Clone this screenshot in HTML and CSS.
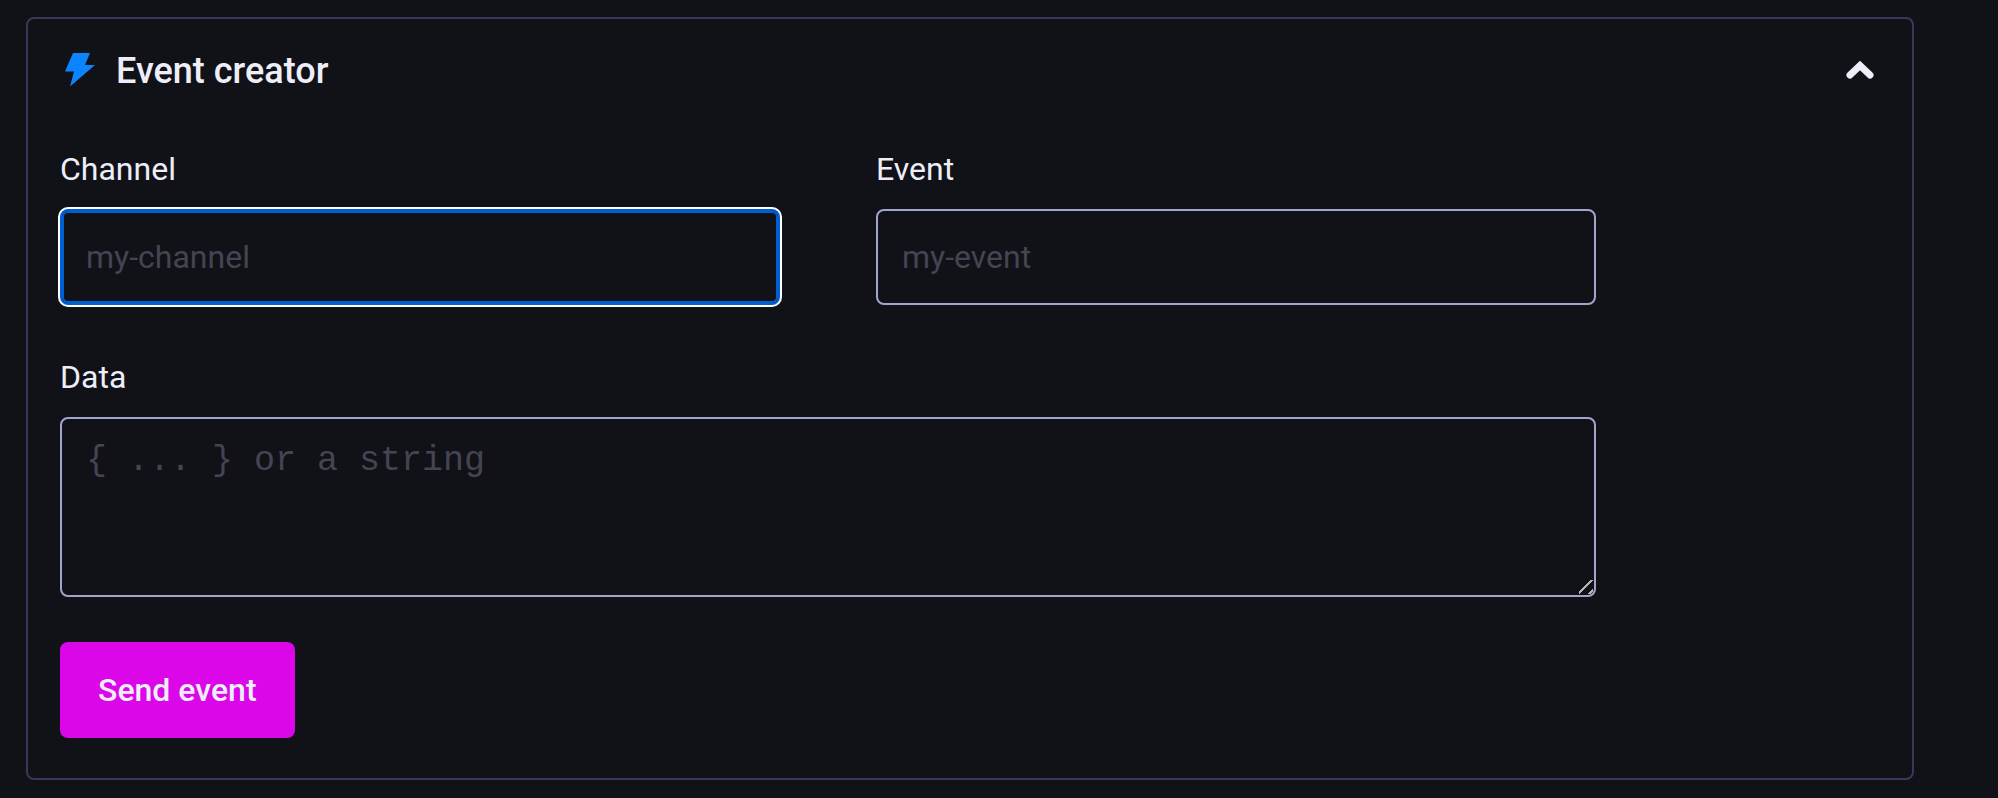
FILE: index.html
```
<!DOCTYPE html>
<html lang="en">
<head>
    <meta charset="UTF-8">
    <meta name="viewport" content="width=device-width, initial-scale=1.0">
    <title>Event creator</title>
    <link rel="stylesheet" href="styles.css">
</head>
<body>
    <main>
        <section class="panel">
            <header class="panel-header">
                <svg class="bolt" viewBox="0 0 30 36" aria-hidden="true">
                    <path d="M8 0H25L20 12H30L5 33.500L9 18.500H0Z"/>
                </svg>
                <h2>Event creator</h2>
                <button type="button" class="toggle" aria-label="Collapse event creator" aria-expanded="true">
                    <svg viewBox="0 0 28 20" aria-hidden="true">
                        <path d="M4 14L14 4.500L24 14"/>
                    </svg>
                </button>
            </header>

            <form class="event-form">
                <div class="row">
                    <div class="field">
                        <label for="channel">Channel</label>
                        <input type="text" id="channel" name="channel" placeholder="my-channel" class="focused">
                    </div>
                    <div class="field">
                        <label for="event">Event</label>
                        <input type="text" id="event" name="event" placeholder="my-event">
                    </div>
                </div>
                <div class="field">
                    <label for="data">Data</label>
                    <textarea id="data" name="data" placeholder="{ ... } or a string"></textarea>
                </div>
                <button type="submit" class="send">Send event</button>
            </form>
        </section>
    </main>
</body>
</html>
```
FILE: styles.css
```
* {
    margin: 0;
    padding: 0;
    box-sizing: border-box;
}

body {
    background-color: #111217;
    color: #eeeefa;
    font-family: Roboto, "Liberation Sans", sans-serif;
    font-size: 32px;
    line-height: 40px;
}

main {
    padding: 17px 84px 18px 26px;
}

/* Panel */
.panel {
    border: 2px solid #363a5a;
    border-radius: 8px;
    padding: 30px 32px 40px;
}

.panel-header {
    display: flex;
    align-items: center;
    padding: 0 6px 0 5px;
    margin-bottom: 56px;
}

.panel-header h2 {
    font-size: 36px;
    font-weight: 500;
    line-height: 44px;
    margin-left: 21px;
}

.bolt {
    width: 30px;
    height: 36px;
    fill: #0a84ff;
}

.toggle {
    margin-left: auto;
    background: none;
    border: none;
    cursor: pointer;
}

.toggle svg {
    display: block;
    width: 28px;
    height: 20px;
    overflow: visible;
    fill: none;
    stroke: #eeeefa;
    stroke-width: 7px;
    stroke-linecap: round;
}

/* Form */
.event-form {
    max-width: 1536px;
}

.row {
    display: flex;
    gap: 96px;
    margin-bottom: 52px;
}

.field {
    display: flex;
    flex-direction: column;
    gap: 20px;
    width: 100%;
}

input,
textarea {
    width: 100%;
    border: 2px solid #a0a5cc;
    border-radius: 8px;
    background-color: #111217;
    color: #eeeefa;
    font: inherit;
    padding: 0 24px;
}

input {
    height: 96px;
}

textarea {
    height: 180px;
    padding-top: 22px;
    font-family: "Liberation Mono", monospace;
    font-size: 35px;
    resize: vertical;
}

textarea::-webkit-resizer {
    background: linear-gradient(135deg, transparent 8px, #b4b4b4 8px, #b4b4b4 10px, transparent 10px, transparent 16px, #b4b4b4 16px, #b4b4b4 18px, transparent 18px) 0 0 / 14px 14px no-repeat;
}

input::placeholder,
textarea::placeholder {
    color: #444452;
}

input:focus,
input.focused {
    border-color: #0060d1;
    outline: none;
    box-shadow: inset 0 0 0 2px #0060d1, 0 0 0 2px #fff;
}

.send {
    display: block;
    height: 96px;
    padding: 0 38px;
    margin-top: 45px;
    border: none;
    border-radius: 8px;
    background-color: #db07e9;
    color: #eeeefa;
    font: inherit;
    font-weight: 500;
    cursor: pointer;
}
```
